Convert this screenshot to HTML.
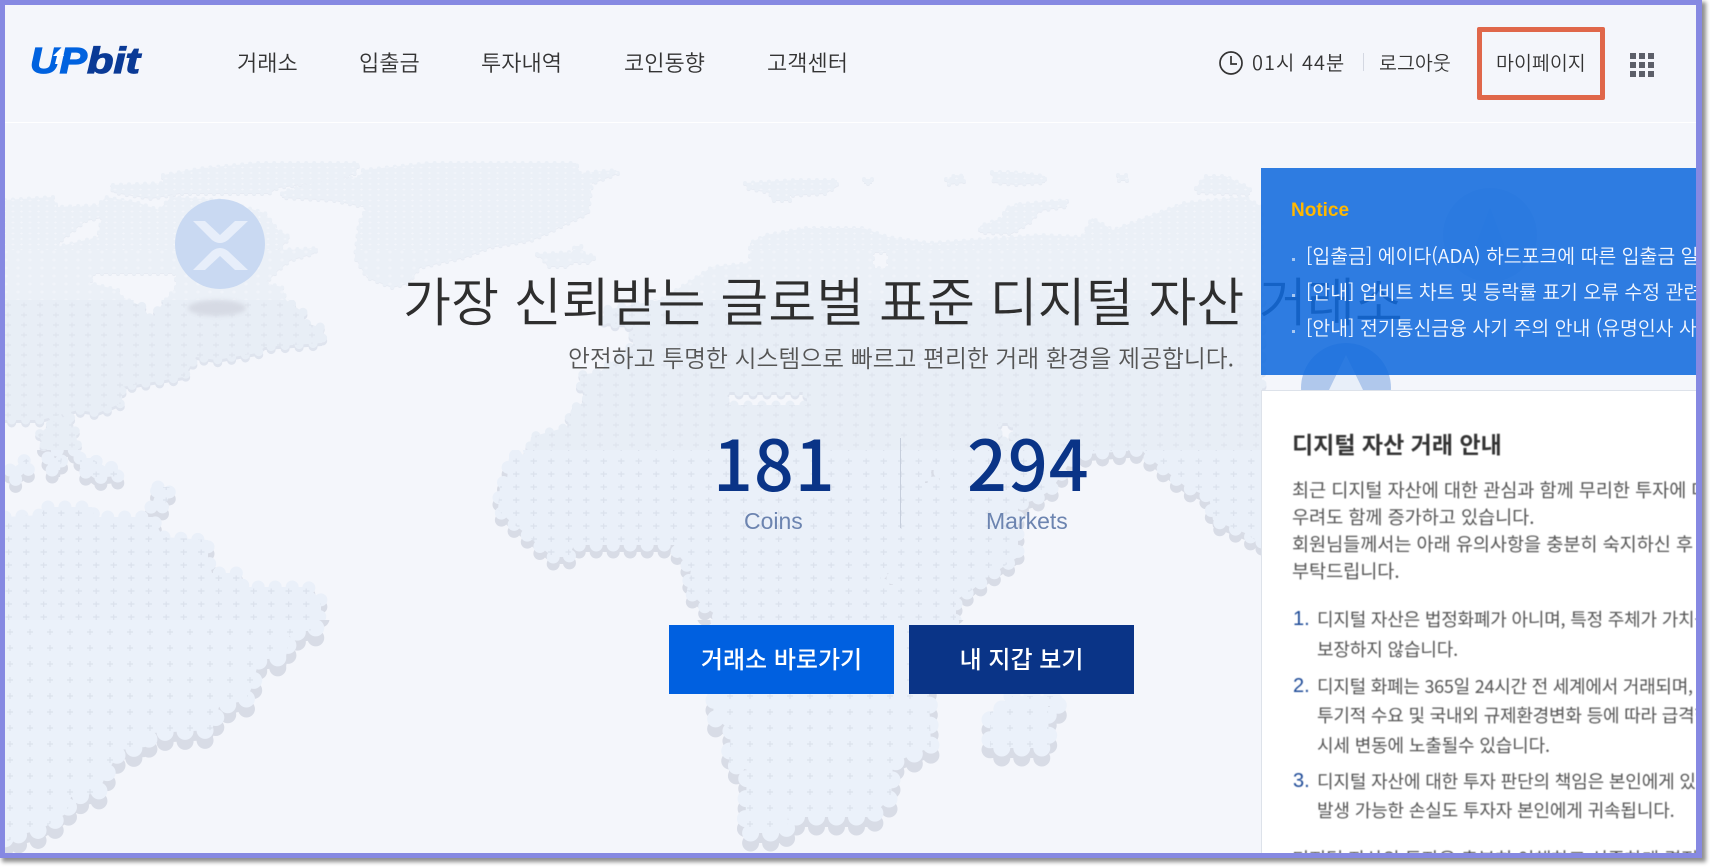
<!DOCTYPE html>
<html lang="ko"><head><meta charset="utf-8"><title>UPbit</title>
<style>
html,body{margin:0;padding:0;background:#fff;width:1710px;height:867px;overflow:hidden}
*{box-sizing:border-box}
body{font-family:"Liberation Sans","Noto Sans CJK KR",sans-serif}
#frame{position:absolute;left:0;top:0;width:1702px;height:858px;border:5px solid #8689e2;border-width:5px 6px 5px 5px;box-shadow:3px 3px 4px 1px #8f8f8f;background:#f4f6fb}
#in{position:absolute;left:0;top:0;width:1691px;height:848px;overflow:hidden;background:#f4f6fb}
.t{position:absolute;white-space:nowrap;font-family:"Noto Sans CJK KR","Liberation Sans",sans-serif;color:#333}
#hline{position:absolute;left:0;top:117px;width:1691px;height:1px;background:#fff}
.nav{top:42px;font-size:22px;line-height:30px;color:#333;font-weight:350}
.hr{font-size:19.5px;line-height:28px;top:43px;color:#333;font-weight:350}
#red{position:absolute;left:1472px;top:22px;width:128px;height:73px;border:5px solid #e0674a;border-radius:2px}
.grid{position:absolute;left:1625px;top:48px;width:24px;height:24px;display:grid;grid-template-columns:repeat(3,6px);grid-template-rows:repeat(3,6px);gap:3px}
.grid i{background:#5c5f69}
#notice{position:absolute;left:1256px;top:163px;width:435px;height:207px;background:rgba(16,106,220,.87);overflow:hidden}
.ni{left:45px;font-size:19.4px;line-height:28px;color:#f4f8ff;font-weight:350}
.bul{position:absolute;left:31px;width:3px;height:3px;background:#a8c8f2}
#panel{position:absolute;left:1256px;top:385px;width:435px;height:463px;background:#fff;border-left:1px solid #dde2ea;border-top:1px solid #dde2ea;overflow:hidden}
#panel .c{position:absolute;left:0;top:0;width:435px;height:463px;filter:blur(.4px)}
.p{left:30px;font-size:18.6px;line-height:27px;color:#555;letter-spacing:-.05px}
.l{left:55px;font-size:18px;line-height:28px;color:#555;letter-spacing:-.15px}
.n{left:31px;font-family:"Liberation Sans",sans-serif;font-size:20px;line-height:28px;color:#1d4a97}
.btn{position:absolute;top:620px;width:225px;height:69px;color:#fff;font-family:"Noto Sans CJK KR","Liberation Sans",sans-serif;font-size:24px;line-height:66px;text-align:center;font-weight:500}
</style></head><body>
<div id="frame"><div id="in">

<svg width="1691" height="848" viewBox="5 5 1691 848" style="position:absolute;left:0;top:0">
<defs>
<path id="land" fill-rule="evenodd" clip-rule="evenodd" d="M5 200L53 197 57 207 98 205 106 197 139 203 159 210 171 197 220 200 265 213 278 230 290 237 278 250 318 248 314 253 290 260 278 270 265 283 282 287 286 300 304 313 304 323 324 328 322 343 265 347 257 353 216 360 196 357 184 377 122 387 122 403 98 413 78 410 41 420 5 420Z
M94 273L176 273 176 287 163 303 151 320 143 307 122 297 118 290 90 283Z
M86 220L102 217 98 237 57 247 61 240Z
M58 418L70 416 76 433 78 450 47 450 38 435Z
M10 470L28 458 30 468 16 480Z M48 458L62 458 60 470 48 470Z M80 458L90 458 108 468 118 466 118 476 94 478 80 468Z
M158 487L170 487 168 500 160 510 150 510Z
M5 517L42 515 42 507 92 507 94 517 152 517 163 537 208 540 208 557 212 573 241 573 243 587 308 587 321 600 321 613 315 630 290 633 286 657 259 660 252 687 246 700 219 707 212 730 152 733 145 747 120 750 107 773 98 793 71 797 67 813 40 830 18 835 5 843Z
M163 175L204 168 257 163 359 163 355 173 335 180 278 187 269 193 220 193 180 193 151 198 114 192 110 185 163 183Z
M363 170L429 163 576 163 580 173 616 170 618 173 592 183 588 213 547 233 531 240 490 247 465 257 420 267 408 283 392 287 367 277 355 257 359 223 367 207 335 200 282 197 282 192 314 183 359 177Z
M537 254L572 252 575 246 582 246 584 254 596 256 590 262 572 262 568 266 548 266 544 260Z
M745 183L795 180 837 180 837 186 825 193 790 195 790 200 772 200 770 192 748 188Z
M864 179L872 179 872 183 864 183Z M946 179L956 175 964 176 964 182 948 184Z M992 172L1012 172 1045 176 1045 182 1016 184 994 182Z M1118 175L1128 175 1128 180 1118 180Z
M1196 188L1205 176 1225 176 1250 188 1250 194 1198 192Z
M1020 204L1067 200 1067 206 1040 210 1030 222 1012 233 980 232 980 226 1002 218 1006 208Z
M806 228L863 228 888 237 929 243 944 242 1041 235 1082 237 1092 218 1113 230 1158 213 1184 203 1245 197 1262 207 1262 545 1245 533 1213 520 1209 497 1186 487 1146 455 1142 450 1075 455 1051 490 1035 500 1018 505 1018 557 988 577 972 590 956 600 956 620 925 633 929 697 931 747 893 763 891 797 871 817 788 817 786 833 745 833 747 770 729 763 731 730 713 717 719 617 705 607 687 590 691 570 680 557 674 545 574 545 569 557 553 557 538 545 525 533 511 522 498 510 500 485 507 480 509 457 529 453 531 437 567 427 571 410 587 400 580 385 580 375 600 372 633 345 633 325 604 323 604 310 660 300 697 277 712 267 750 263 750 243 766 235Z
M725 392L807 392 807 405 725 405Z M873 252L888 252 888 268 873 268Z M998 423L1013 423 1013 441 998 441Z M925 470L940 470 940 483 925 483Z M881 573L893 573 893 585 881 585Z
M1012 696L1062 696 1058 706 1048 706 1049 748 990 748 990 712 1006 708Z"/>
<clipPath id="lc"><use href="#land"/></clipPath>
<clipPath id="b1"><rect x="0" y="150" width="1300" height="150"/></clipPath>
<clipPath id="b2"><rect x="0" y="300" width="1300" height="150"/></clipPath>
<clipPath id="b3"><rect x="0" y="450" width="1300" height="170"/></clipPath>
<clipPath id="b4"><rect x="0" y="620" width="1300" height="250"/></clipPath>
<pattern id="p1" width="8.5" height="5.5" patternUnits="userSpaceOnUse"><path d="M3 2.5H6M4.5 1.5V3.5" stroke="#f4f6fb" stroke-width=".8"/></pattern>
<pattern id="p1b" width="12" height="8" patternUnits="userSpaceOnUse"><path d="M4 4H8M6 2.5V5.5" stroke="#f4f6fb" stroke-width=".8"/></pattern>
<pattern id="p2" width="16" height="10" patternUnits="userSpaceOnUse"><path d="M5 5H11M8 2.5V7.5" stroke="#dde3ec" stroke-width=".9"/></pattern>
<pattern id="p3" width="17.5" height="13" patternUnits="userSpaceOnUse"><path d="M5.5 6H12M8.7 3.5V9" stroke="#dbe1ec" stroke-width="1.2"/></pattern>
<pattern id="p4" width="20" height="16" patternUnits="userSpaceOnUse"><path d="M7 8H13M10 5V11" stroke="#dbe1ec" stroke-width="1.2"/></pattern>
</defs>
<g stroke-linecap="round">
<g clip-path="url(#b1)"><use href="#land" transform="translate(0 1)" stroke-width="4" stroke-dasharray="0 8" fill="#e7ebf3" stroke="#e7ebf3"/></g>
<g clip-path="url(#b2)"><use href="#land" transform="translate(0 3)" stroke-width="9" stroke-dasharray="0 14" fill="#dfe4ee" stroke="#dfe4ee"/></g>
<g clip-path="url(#b3)"><use href="#land" transform="translate(0 7)" stroke-width="13" stroke-dasharray="0 17" fill="#d8dce6" stroke="#d8dce6"/></g>
<g clip-path="url(#b4)"><use href="#land" transform="translate(0 10)" stroke-width="17" stroke-dasharray="0 20" fill="#d8dce6" stroke="#d8dce6"/></g>
</g>
<g stroke-linecap="round">
<g clip-path="url(#b1)"><use href="#land" fill="#ebf0f7" stroke="#ebf0f7" stroke-width="4" stroke-dasharray="0 8"/></g>
<g clip-path="url(#b2)"><use href="#land" fill="#e8eef6" stroke="#e8eef6" stroke-width="9" stroke-dasharray="0 14"/></g>
<g clip-path="url(#b3)"><use href="#land" fill="#eaf0f9" stroke="#eaf0f9" stroke-width="13" stroke-dasharray="0 17"/></g>
<g clip-path="url(#b4)"><use href="#land" fill="#ebf1fa" stroke="#ebf1fa" stroke-width="17" stroke-dasharray="0 20"/></g>
</g>
<g clip-path="url(#lc)">
<rect x="0" y="150" width="1300" height="100" fill="url(#p1)"/>
<rect x="0" y="250" width="1300" height="50" fill="url(#p1b)"/>
<rect x="0" y="300" width="1300" height="150" fill="url(#p2)"/>
<rect x="0" y="450" width="1300" height="170" fill="url(#p3)"/>
<rect x="0" y="620" width="1300" height="250" fill="url(#p4)"/>
</g>
<ellipse cx="217" cy="308" rx="29" ry="8" fill="#d6dae4" style="filter:blur(2px)"/>
<circle cx="220" cy="244" r="45" fill="#c9d9f2"/>
<path fill="#e7eefa" d="M193 221H205L220 235 235 221H248L228 240Q220 246 212 240ZM193 270H205L220 256 235 270H248L228 251Q220 245 212 251Z"/>
<circle cx="1346" cy="388" r="45" fill="#b0c8ec"/>
<path fill="#e8eff9" d="M1346 355L1364 392H1328Z"/>
<circle cx="1490" cy="235" r="47" fill="#e0e8f6"/>
<path fill="#c2d4f0" d="M1490 207L1510 260H1470Z" opacity=".6"/>
</svg>

<div id="hline"></div>

<svg width="125" height="40" style="position:absolute;left:22px;top:37px;overflow:visible">
<text x="3" y="31" font-family="Liberation Sans" font-weight="700" font-style="italic" font-size="36" fill="#0062df" stroke="#0062df" stroke-width="1.2" textLength="57" lengthAdjust="spacingAndGlyphs">UP</text>
<text x="60" y="31" font-family="Liberation Sans" font-weight="700" font-style="italic" font-size="36" fill="#0a3a96" stroke="#0a3a96" stroke-width="1.2" textLength="53" lengthAdjust="spacingAndGlyphs">bit</text>
<path d="M28 22L30 14H26L34 6 37 14H33L31 22Z" fill="#fff"/>
</svg>

<div class="t nav" style="left:232px">거래소</div>
<div class="t nav" style="left:354px">입출금</div>
<div class="t nav" style="left:476px">투자내역</div>
<div class="t nav" style="left:619px">코인동향</div>
<div class="t nav" style="left:762px">고객센터</div>

<svg width="26" height="26" style="position:absolute;left:1213px;top:45px"><circle cx="13" cy="13" r="11" fill="none" stroke="#333" stroke-width="1.7"/><path d="M13 6V14H19" fill="none" stroke="#333" stroke-width="1.7"/></svg>
<div class="t hr" style="left:1247px;font-size:20px;letter-spacing:1px">01시 44분</div>
<div style="position:absolute;left:1358px;top:48px;width:1px;height:18px;background:#d4d8e2"></div>
<div class="t hr" style="left:1374px">로그아웃</div>
<div id="red"></div>
<div class="t hr" style="left:1491px">마이페이지</div>
<div class="grid"><i></i><i></i><i></i><i></i><i></i><i></i><i></i><i></i><i></i></div>

<div class="t" style="left:398px;top:254px;font-size:52.2px;line-height:80px;font-weight:350;color:#2e2e2e">가장 신뢰받는 글로벌 표준 디지털 자산 거래소</div>
<div class="t" style="left:563px;top:334px;font-size:23.8px;line-height:36px;color:#555;font-weight:350">안전하고 투명한 시스템으로 빠르고 편리한 거래 환경을 제공합니다.</div>

<div class="t" style="left:708px;top:412px;font-size:70px;line-height:90px;font-weight:500;color:#0a3487;letter-spacing:1px">181</div>
<div class="t" style="left:962px;top:412px;font-size:70px;line-height:90px;font-weight:500;color:#0a3487;letter-spacing:1px">294</div>
<div style="position:absolute;left:895px;top:433px;width:1px;height:90px;background:#c6cedc"></div>
<div class="t" style="left:739px;top:501px;font-family:'Liberation Sans',sans-serif;font-size:23px;line-height:30px;color:#6c84b0">Coins</div>
<div class="t" style="left:981px;top:501px;font-family:'Liberation Sans',sans-serif;font-size:23px;line-height:30px;color:#6c84b0">Markets</div>

<div class="btn" style="left:664px;background:#0060e0">거래소 바로가기</div>
<div class="btn" style="left:904px;background:#0a3487">내 지갑 보기</div>

<div id="notice">
<div class="t" style="left:30px;top:30px;font-family:'Liberation Sans',sans-serif;font-weight:700;font-size:19px;line-height:26px;color:#ffb800">Notice</div>
<i class="bul" style="top:90px"></i><div class="t ni" style="top:73px">[입출금] 에이다(ADA) 하드포크에 따른 입출금 일시 중단 안내</div>
<i class="bul" style="top:126px"></i><div class="t ni" style="top:109px">[안내] 업비트 차트 및 등락률 표기 오류 수정 관련 안내</div>
<i class="bul" style="top:162px"></i><div class="t ni" style="top:145px">[안내] 전기통신금융 사기 주의 안내 (유명인사 사칭)</div>
</div>

<div id="panel"><div class="c">
<div class="t" style="left:30px;top:35px;font-size:23px;line-height:34px;font-weight:700;color:#333">디지털 자산 거래 안내</div>
<div class="t p" style="top:85px">최근 디지털 자산에 대한 관심과 함께 무리한 투자에 대한</div>
<div class="t p" style="top:112px">우려도 함께 증가하고 있습니다.</div>
<div class="t p" style="top:139px">회원님들께서는 아래 유의사항을 충분히 숙지하신 후 거래를</div>
<div class="t p" style="top:166px">부탁드립니다.</div>
<div class="t n" style="top:214px">1.</div><div class="t l" style="top:214px;letter-spacing:-.2px">디지털 자산은 법정화폐가 아니며, 특정 주체가 가치를</div>
<div class="t l" style="top:244px">보장하지 않습니다.</div>
<div class="t n" style="top:281px">2.</div><div class="t l" style="top:281px;letter-spacing:-.25px">디지털 화폐는 365일 24시간 전 세계에서 거래되며,</div>
<div class="t l" style="top:310px;letter-spacing:-.2px">투기적 수요 및 국내외 규제환경변화 등에 따라 급격한</div>
<div class="t l" style="top:340px">시세 변동에 노출될수 있습니다.</div>
<div class="t n" style="top:376px">3.</div><div class="t l" style="top:376px">디지털 자산에 대한 투자 판단의 책임은 본인에게 있으며,</div>
<div class="t l" style="top:405px">발생 가능한 손실도 투자자 본인에게 귀속됩니다.</div>
<div class="t p" style="top:454px">디지털 자산의 투자은 충분히 이해하고 신중하게 결정</div>
</div></div>

</div></div>
</body></html>
